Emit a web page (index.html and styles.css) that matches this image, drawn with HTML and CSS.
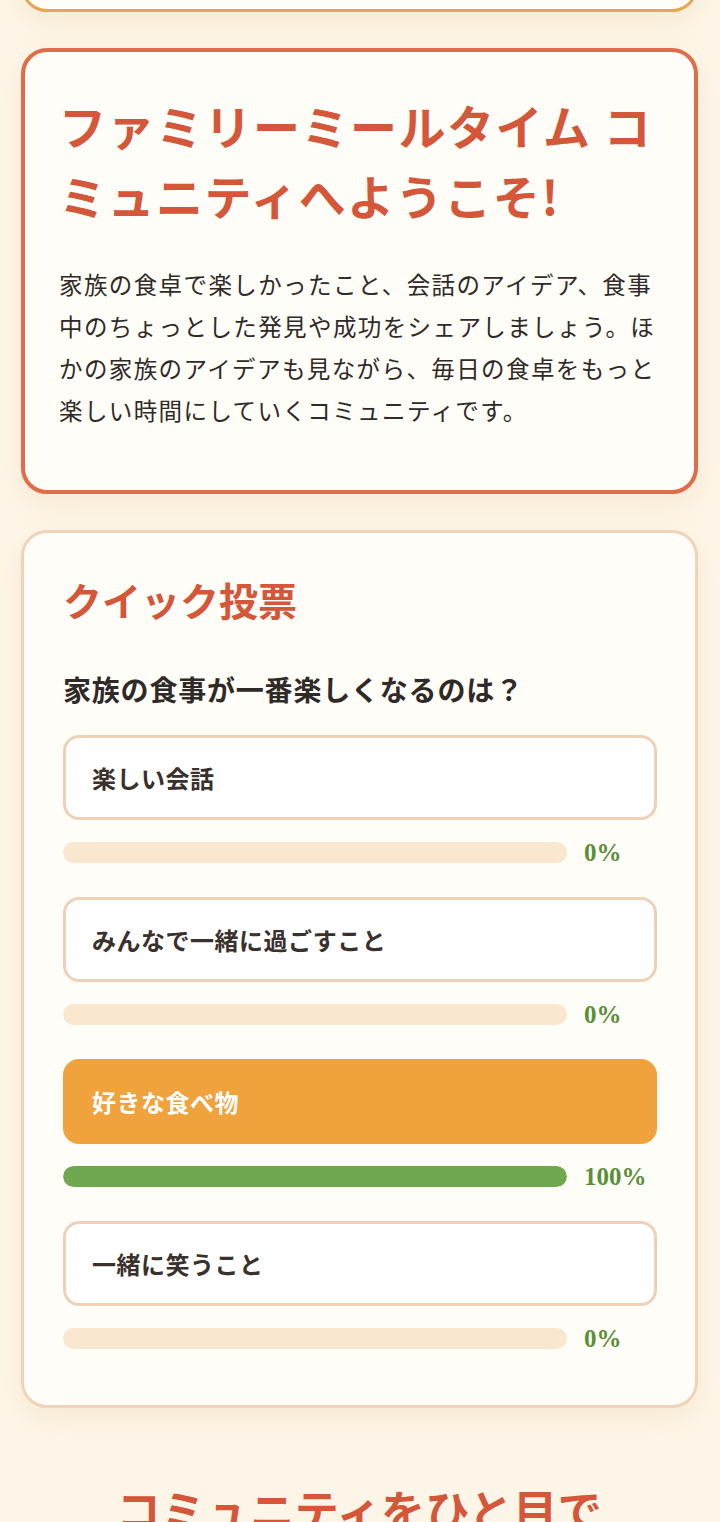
FILE: index.html
```html
<!DOCTYPE html>
<html lang="ja">
<head>
<meta charset="utf-8">
<meta name="viewport" content="width=device-width, initial-scale=1">
<title>ファミリーミールタイム コミュニティ</title>
<link rel="stylesheet" href="styles.css">
</head>
<body>
<main class="page">
  <section class="card card-prev" aria-hidden="true"></section>

  <section class="card card-welcome">
    <h1 class="welcome-title">ファミリーミールタイム コミュニティへようこそ!</h1>
    <p class="welcome-text">家族の食卓で楽しかったこと、会話のアイデア、食事中のちょっとした発見や成功をシェアしましょう。ほかの家族のアイデアも見ながら、毎日の食卓をもっと楽しい時間にしていくコミュニティです。</p>
  </section>

  <section class="card card-poll">
    <h2 class="poll-title">クイック投票</h2>
    <p class="poll-question">家族の食事が一番楽しくなるのは？</p>
    <div class="poll-options">
      <div class="poll-item">
        <button class="option">楽しい会話</button>
        <div class="result"><div class="bar"><div class="fill" style="width:0%"></div></div><span class="pct">0%</span></div>
      </div>
      <div class="poll-item">
        <button class="option">みんなで一緒に過ごすこと</button>
        <div class="result"><div class="bar"><div class="fill" style="width:0%"></div></div><span class="pct">0%</span></div>
      </div>
      <div class="poll-item">
        <button class="option selected">好きな食べ物</button>
        <div class="result"><div class="bar"><div class="fill" style="width:100%"></div></div><span class="pct">100%</span></div>
      </div>
      <div class="poll-item">
        <button class="option">一緒に笑うこと</button>
        <div class="result"><div class="bar"><div class="fill" style="width:0%"></div></div><span class="pct">0%</span></div>
      </div>
    </div>
  </section>

  <h2 class="section-title">コミュニティをひと目で</h2>
</main>
</body>
</html>
```

FILE: styles.css
```css
* { box-sizing: border-box; }

html, body {
  margin: 0;
  padding: 0;
}

body {
  background: #fdf6e8;
  font-family: "Noto Sans CJK JP", "Noto Sans", sans-serif;
  color: #2f2a28;
}

.page {
  display: flex;
  flex-direction: column;
  gap: 36px;
  padding: 0 22px 0 21px;
  overflow: hidden;
  height: 1522px;
}

.card {
  background: #fffdf7;
  border-radius: 26px;
  box-shadow: 0 10px 28px rgba(226, 170, 110, 0.18);
  flex: none;
}

.card-prev {
  height: 120px;
  margin-top: -108px;
  border: 3px solid #e6a652;
}

.card-welcome {
  border: 4px solid #e06c4a;
  padding: 38px 30px 59px 34px;
}

.welcome-title {
  margin: 0 0 33px 0;
  font-size: 47px;
  line-height: 70px;
  font-weight: 700;
  color: #d4573a;
  letter-spacing: 1.5px;
}

.welcome-text {
  margin: 0;
  font-size: 23.5px;
  line-height: 42px;
  font-weight: 400;
  color: #2f2a28;
  letter-spacing: 1.4px;
}

.card-poll {
  border: 3px solid #f0d3bb;
  padding: 38px 38px 56px 39px;
}

.poll-title {
  margin: 0 0 42px 0;
  font-size: 39px;
  line-height: 56px;
  font-weight: 700;
  color: #d4573a;
}

.poll-question {
  margin: 0 0 26px 0;
  font-size: 28px;
  line-height: 40px;
  font-weight: 700;
  color: #2f2a28;
  letter-spacing: 0.8px;
}

.poll-options {
  display: flex;
  flex-direction: column;
  gap: 34px;
}

.poll-item {
  display: flex;
  flex-direction: column;
  gap: 22px;
}

.option {
  display: flex;
  align-items: center;
  width: 100%;
  height: 85px;
  padding: 0 26px;
  background: #ffffff;
  border: 3px solid #edd1b9;
  border-radius: 16px;
  font-family: "Noto Sans CJK JP", "Noto Sans", sans-serif;
  font-size: 24px;
  font-weight: 700;
  color: #3a302c;
  text-align: left;
  letter-spacing: 0.5px;
}

.option.selected {
  background: #f0a23c;
  border-color: #f0a23c;
  color: #ffffff;
}

.result {
  display: flex;
  align-items: center;
  gap: 17px;
  height: 21px;
}

.bar {
  flex: 1;
  height: 21px;
  border-radius: 11px;
  background: #f9e8cf;
  overflow: hidden;
}

.fill {
  height: 100%;
  background: #6fa84e;
  border-radius: 11px;
}

.pct {
  width: 73px;
  font-family: "Liberation Serif", "Times New Roman", serif;
  font-weight: 700;
  font-size: 25px;
  line-height: 24px;
  color: #5a8f3a;
}

.section-title {
  margin: 35px 0 0 0;
  text-align: center;
  font-size: 44px;
  line-height: 60px;
  font-weight: 700;
  color: #d4573a;
  letter-spacing: 0.5px;
  flex: none;
}
```
